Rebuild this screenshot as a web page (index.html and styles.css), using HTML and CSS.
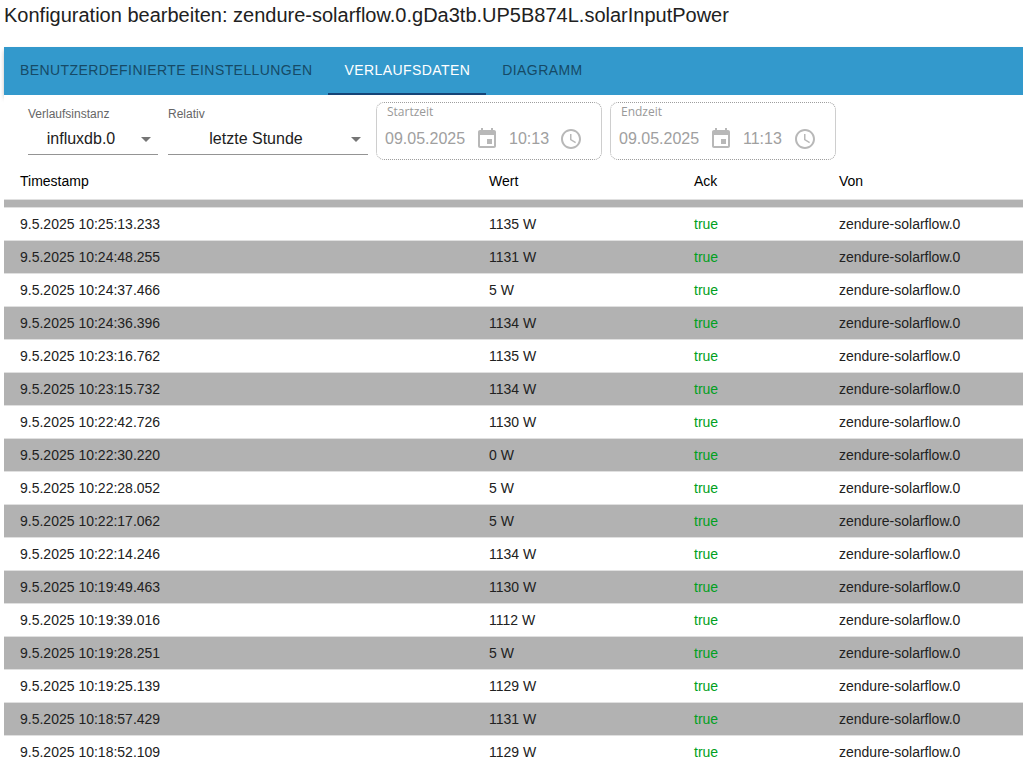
FILE: index.html
```html
<!DOCTYPE html>
<html lang="de">
  <head>
    <meta charset="utf-8" />
    <meta name="viewport" content="width=device-width, initial-scale=1" />
    <title>Konfiguration bearbeiten</title>
    <link rel="stylesheet" href="styles.css">
  </head>
  <body>
    <h1>Konfiguration bearbeiten: zendure-solarflow.0.gDa3tb.UP5B874L.solarInputPower</h1>

    <nav class="tabs">
      <a href="#custom" class="tab">Benutzerdefinierte Einstellungen</a>
      <a href="#history" class="tab active" aria-current="page">Verlaufsdaten</a>
      <a href="#chart" class="tab">Diagramm</a>
    </nav>

    <main class="panel">
      <form class="toolbar">
        <div class="selects">
          <div class="control instance">
            <label for="instance">Verlaufsinstanz</label>
            <div class="select-wrap">
              <select id="instance">
                <option>influxdb.0</option>
              </select>
              <svg class="arrow" viewBox="0 0 24 24"><path d="M7 10l5 5 5-5z" /></svg>
            </div>
          </div>
          <div class="control relative-range">
            <label for="range">Relativ</label>
            <div class="select-wrap">
              <select id="range">
                <option>letzte Stunde</option>
              </select>
              <svg class="arrow" viewBox="0 0 24 24"><path d="M7 10l5 5 5-5z" /></svg>
            </div>
          </div>
        </div>

        <div class="time-box">
          <label for="start-date">Startzeit</label>
          <div class="time-row">
            <input id="start-date" class="date" type="text" value="09.05.2025" disabled />
            <button type="button" class="icon-button" aria-label="Startdatum" disabled>
              <svg viewBox="0 0 24 24"><path d="M17 12h-5v5h5v-5zM16 1v2H8V1H6v2H5c-1.11 0-1.99.9-1.99 2L3 19c0 1.1.89 2 2 2h14c1.1 0 2-.9 2-2V5c0-1.1-.9-2-2-2h-1V1h-2zm3 18H5V8h14v11z" /></svg>
            </button>
            <input class="time" type="text" value="10:13" aria-label="Startuhrzeit" disabled />
            <button type="button" class="icon-button" aria-label="Startuhrzeit" disabled>
              <svg viewBox="0 0 24 24"><path d="M11.99 2C6.47 2 2 6.48 2 12s4.47 10 9.99 10C17.52 22 22 17.52 22 12S17.52 2 11.99 2zM12 20c-4.42 0-8-3.58-8-8s3.58-8 8-8 8 3.58 8 8-3.58 8-8 8z" /><path d="M12.5 7H11v6l5.25 3.15.75-1.23-4.5-2.67z" /></svg>
            </button>
          </div>
        </div>

        <div class="time-box">
          <label for="end-date">Endzeit</label>
          <div class="time-row">
            <input id="end-date" class="date" type="text" value="09.05.2025" disabled />
            <button type="button" class="icon-button" aria-label="Enddatum" disabled>
              <svg viewBox="0 0 24 24"><path d="M17 12h-5v5h5v-5zM16 1v2H8V1H6v2H5c-1.11 0-1.99.9-1.99 2L3 19c0 1.1.89 2 2 2h14c1.1 0 2-.9 2-2V5c0-1.1-.9-2-2-2h-1V1h-2zm3 18H5V8h14v11z" /></svg>
            </button>
            <input class="time" type="text" value="11:13" aria-label="Enduhrzeit" disabled />
            <button type="button" class="icon-button" aria-label="Enduhrzeit" disabled>
              <svg viewBox="0 0 24 24"><path d="M11.99 2C6.47 2 2 6.48 2 12s4.47 10 9.99 10C17.52 22 22 17.52 22 12S17.52 2 11.99 2zM12 20c-4.42 0-8-3.58-8-8s3.58-8 8-8 8 3.58 8 8-3.58 8-8 8z" /><path d="M12.5 7H11v6l5.25 3.15.75-1.23-4.5-2.67z" /></svg>
            </button>
          </div>
        </div>
      </form>

      <table>
        <thead>
          <tr>
            <th>Timestamp</th>
            <th class="col-value">Wert</th>
            <th class="col-ack">Ack</th>
            <th class="col-from">Von</th>
          </tr>
        </thead>
        <tbody>
          <!-- rest of the row that is scrolled under the header -->
          <tr class="scrolled" aria-hidden="true"><td colspan="4"></td></tr>
          <tr><td>9.5.2025 10:25:13.233</td><td>1135 W</td><td class="ack">true</td><td>zendure-solarflow.0</td></tr>
          <tr><td>9.5.2025 10:24:48.255</td><td>1131 W</td><td class="ack">true</td><td>zendure-solarflow.0</td></tr>
          <tr><td>9.5.2025 10:24:37.466</td><td>5 W</td><td class="ack">true</td><td>zendure-solarflow.0</td></tr>
          <tr><td>9.5.2025 10:24:36.396</td><td>1134 W</td><td class="ack">true</td><td>zendure-solarflow.0</td></tr>
          <tr><td>9.5.2025 10:23:16.762</td><td>1135 W</td><td class="ack">true</td><td>zendure-solarflow.0</td></tr>
          <tr><td>9.5.2025 10:23:15.732</td><td>1134 W</td><td class="ack">true</td><td>zendure-solarflow.0</td></tr>
          <tr><td>9.5.2025 10:22:42.726</td><td>1130 W</td><td class="ack">true</td><td>zendure-solarflow.0</td></tr>
          <tr><td>9.5.2025 10:22:30.220</td><td>0 W</td><td class="ack">true</td><td>zendure-solarflow.0</td></tr>
          <tr><td>9.5.2025 10:22:28.052</td><td>5 W</td><td class="ack">true</td><td>zendure-solarflow.0</td></tr>
          <tr><td>9.5.2025 10:22:17.062</td><td>5 W</td><td class="ack">true</td><td>zendure-solarflow.0</td></tr>
          <tr><td>9.5.2025 10:22:14.246</td><td>1134 W</td><td class="ack">true</td><td>zendure-solarflow.0</td></tr>
          <tr><td>9.5.2025 10:19:49.463</td><td>1130 W</td><td class="ack">true</td><td>zendure-solarflow.0</td></tr>
          <tr><td>9.5.2025 10:19:39.016</td><td>1112 W</td><td class="ack">true</td><td>zendure-solarflow.0</td></tr>
          <tr><td>9.5.2025 10:19:28.251</td><td>5 W</td><td class="ack">true</td><td>zendure-solarflow.0</td></tr>
          <tr><td>9.5.2025 10:19:25.139</td><td>1129 W</td><td class="ack">true</td><td>zendure-solarflow.0</td></tr>
          <tr><td>9.5.2025 10:18:57.429</td><td>1131 W</td><td class="ack">true</td><td>zendure-solarflow.0</td></tr>
          <tr><td>9.5.2025 10:18:52.109</td><td>1129 W</td><td class="ack">true</td><td>zendure-solarflow.0</td></tr>
        </tbody>
      </table>
    </main>
  </body>
</html>
```
FILE: styles.css
```css
* {
  box-sizing: border-box;
}

body {
  font-family: "Liberation Sans", Arial, sans-serif;
  font-size: 14px;
  color: #212121;
  background-color: #fff;
  margin: 0;
  padding-left: 4px;
}

h1 {
  font-size: 20px;
  font-weight: normal;
  line-height: 30px;
  margin: 0 0 17px;
}

.tabs {
  display: flex;
  background-color: #3399cc;
  box-shadow: 0 2px 4px -1px rgba(0, 0, 0, 0.2), 0 4px 5px rgba(0, 0, 0, 0.14);
}

.tab {
  padding: 0 16px;
  line-height: 46px;
  border-bottom: 2px solid transparent;
  color: #164a66;
  letter-spacing: 0.03em;
  text-decoration: none;
  text-transform: uppercase;
}

.tab.active {
  color: #fff;
  border-bottom-color: #164477;
}

.panel {
  position: relative;
  background-color: #fff;
}

.toolbar {
  display: flex;
  align-items: flex-start;
  gap: 8px;
  padding: 7px 24px 3px;
}

.selects {
  display: flex;
  gap: 10px;
  padding-top: 4px;
}

.control label {
  display: block;
  font-size: 12px;
  line-height: 16px;
  color: #666;
}

.instance {
  width: 130px;
}

.relative-range {
  width: 200px;
}

.select-wrap {
  position: relative;
  border-bottom: 1px solid #949494;
}

select {
  display: block;
  width: 100%;
  height: 32px;
  padding: 0 24px 0 0;
  border: none;
  background: none;
  appearance: none;
  font: inherit;
  font-size: 16px;
  color: inherit;
  text-align: center;
  text-align-last: center;
}

.arrow {
  position: absolute;
  right: 0;
  top: 5px;
  width: 24px;
  height: 24px;
  fill: #757575;
  pointer-events: none;
}

.time-box {
  width: 226px;
  padding: 1px 8px 8px;
  border: 1px dotted #9e9e9e;
  border-radius: 8px;
}

.time-box label {
  display: block;
  margin-bottom: 7px;
  padding-left: 2px;
  font-family: "Open Sans", sans-serif;
  font-size: 12px;
  line-height: 16px;
  color: #999;
}

.time-row {
  display: flex;
  align-items: center;
}

.time-row input {
  height: 24px;
  padding: 0;
  border: none;
  background: none;
  font: inherit;
  font-size: 16px;
  color: #a0a0a0;
}

.date {
  width: 90px;
}

.time {
  width: 50px;
  margin-left: 10px;
}

.icon-button {
  width: 24px;
  height: 24px;
  padding: 0;
  border: none;
  background: none;
}

.icon-button svg {
  display: block;
  fill: #b8b8b8;
}

table {
  width: 100%;
  table-layout: fixed;
  border-collapse: separate;
  border-spacing: 0;
}

th,
td {
  height: 33px;
  padding: 0 16px;
  text-align: left;
  border-bottom: 1px solid #e0e0e0;
}

th {
  height: 37px;
  font-weight: normal;
  color: #000;
}

.col-value {
  width: 205px;
}

.col-ack {
  width: 145px;
}

.col-from {
  width: 200px;
}

tbody tr:nth-child(odd) {
  background-color: #b2b2b2;
}

.scrolled td {
  height: 8px;
}

tbody tr:last-child td {
  height: 32px;
  border-bottom: none;
}

.ack {
  color: #00a021;
}
```
